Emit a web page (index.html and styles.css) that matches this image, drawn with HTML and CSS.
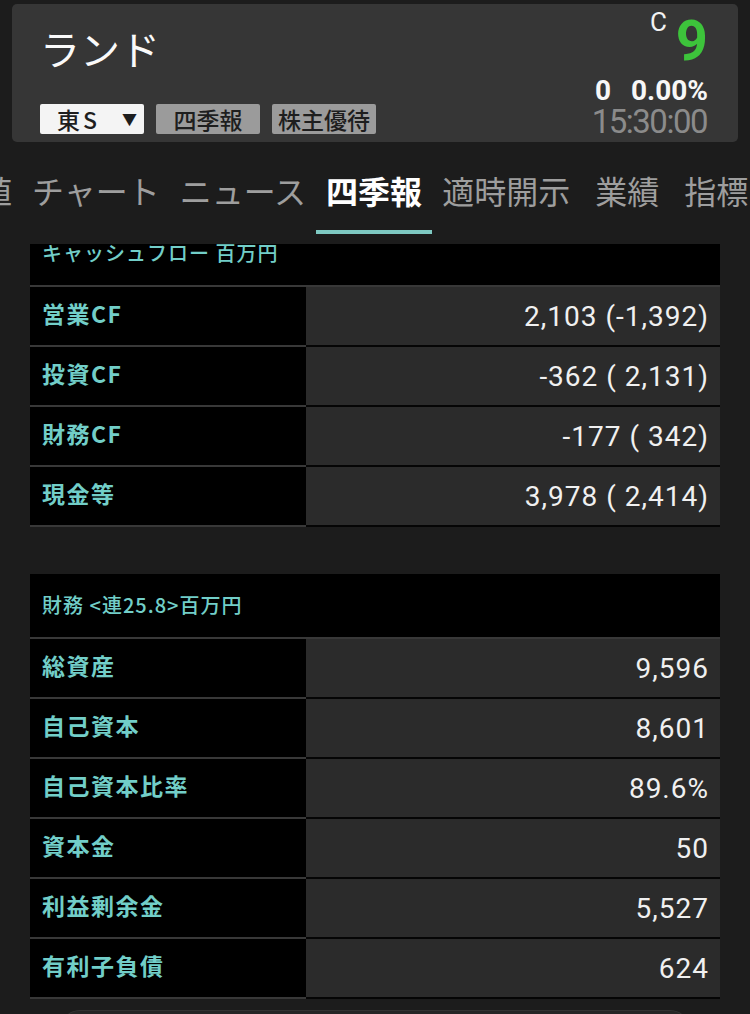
FILE: index.html
```html
<!DOCTYPE html>
<html lang="ja">
<head>
<meta charset="utf-8">
<title>ランド</title>
<link rel="stylesheet" href="styles.css">
</head>
<body>
<header class="card">
  <div class="card-left">
    <div class="title">ランド</div>
    <div class="badges">
      <div class="badge badge-white"><span class="mkt">東S</span><span class="caret">▼</span></div>
      <div class="badge">四季報</div>
      <div class="badge">株主優待</div>
    </div>
  </div>
  <div class="card-right">
    <div class="price-row">
      <span class="c-mark">C</span>
      <span class="price">9</span>
    </div>
    <div class="change-row">
      <span class="chg">0</span>
      <span class="pct">0.00%</span>
    </div>
    <div class="time">15:30:00</div>
  </div>
</header>

<nav class="tabs">
  <div class="tab">気配値</div>
  <div class="tab">チャート</div>
  <div class="tab">ニュース</div>
  <div class="tab active">四季報</div>
  <div class="tab">適時開示</div>
  <div class="tab tab-short">業績</div>
  <div class="tab">指標</div>
</nav>

<main class="viewport">
  <div class="scroll">
    <section class="block">
      <div class="block-head">キャッシュフロー 百万円</div>
      <div class="row"><div class="lbl">営業CF</div><div class="val">2,103 (-1,392)</div></div>
      <div class="row"><div class="lbl">投資CF</div><div class="val">-362 ( 2,131)</div></div>
      <div class="row"><div class="lbl">財務CF</div><div class="val">-177 ( 342)</div></div>
      <div class="row"><div class="lbl">現金等</div><div class="val">3,978 ( 2,414)</div></div>
    </section>

    <section class="block">
      <div class="block-head">財務 &lt;連25.8&gt;百万円</div>
      <div class="row"><div class="lbl">総資産</div><div class="val">9,596</div></div>
      <div class="row"><div class="lbl">自己資本</div><div class="val">8,601</div></div>
      <div class="row"><div class="lbl">自己資本比率</div><div class="val">89.6%</div></div>
      <div class="row"><div class="lbl">資本金</div><div class="val">50</div></div>
      <div class="row"><div class="lbl">利益剰余金</div><div class="val">5,527</div></div>
      <div class="row"><div class="lbl">有利子負債</div><div class="val">624</div></div>
    </section>

    <div class="more-btn"></div>
  </div>
</main>
</body>
</html>
```

FILE: styles.css
```css
* { box-sizing: border-box; }

html, body {
  margin: 0;
  padding: 0;
  background: #1c1c1c;
  height: 1014px;
  overflow: hidden;
}

body {
  font-family: "Noto Sans CJK JP", "Noto Sans", sans-serif;
  color: #fff;
}

/* ---------- header card ---------- */
.card {
  margin: 4px 12px 0;
  height: 138px;
  background: #363636;
  border-radius: 5px;
  display: flex;
  justify-content: space-between;
  padding: 0 30px 0 28px;
}

.card-left {
  display: flex;
  flex-direction: column;
  padding-top: 24px;
}

.title {
  font-size: 40px;
  line-height: 40px;
  height: 40px;
  color: #fafafa;
}

.badges {
  margin-top: 36px;
  display: flex;
  gap: 12px;
}

.badge {
  width: 104px;
  height: 30px;
  background: #9b9b9b;
  color: #1e1e1e;
  font-size: 23px;
  line-height: 30px;
  text-align: center;
  border-radius: 2px;
  font-weight: 500;
}

.badge-white {
  background: #f4f4f4;
  text-align: left;
  padding-left: 17px;
  display: flex;
  align-items: center;
}

.mkt {
  letter-spacing: 3px;
}

.caret {
  font-size: 15px;
  margin-left: 22px;
  line-height: 30px;
}

.card-right {
  display: flex;
  flex-direction: column;
  align-items: flex-end;
  padding-top: 5px;
  font-family: Roboto, "Noto Sans", sans-serif;
}

.price-row {
  display: flex;
  align-items: flex-start;
  gap: 9px;
}

.c-mark {
  font-size: 26px;
  line-height: 26px;
  color: #f2f2f2;
}

.price {
  margin-top: 4px;
  font-size: 56px;
  line-height: 56px;
  font-weight: 700;
  color: #3dc33b;
}

.change-row {
  margin-top: 8px;
  display: flex;
  gap: 20px;
  font-size: 28px;
  line-height: 28px;
  font-weight: 700;
  color: #f7f7f7;
}

.time {
  font-size: 33px;
  line-height: 33px;
  letter-spacing: -1.5px;
  color: #8b8b8b;
  margin-right: 1px;
}

/* ---------- tabs ---------- */
.tabs {
  display: flex;
  margin-left: -94px;
  padding-top: 32px;
  white-space: nowrap;
}

.tab {
  flex: none;
  padding: 0 10px 24px;
  font-size: 32px;
  line-height: 32px;
  color: #9e9e9e;
  border-bottom: 4px solid transparent;
}

.tab-short {
  padding: 0 15px 24px;
}

.tab.active {
  color: #ffffff;
  font-weight: 700;
  border-bottom-color: #7ec9c2;
}

/* ---------- content ---------- */
.viewport {
  margin: 10px 30px 0;
  height: 770px;
  overflow: hidden;
}

.scroll {
  margin-top: -22px;
}

.block + .block {
  margin-top: 47px;
}

.block-head {
  height: 65px;
  background: #000;
  border-bottom: 2px solid #383838;
  padding-left: 12px;
  display: flex;
  align-items: center;
  padding-bottom: 2px;
  font-size: 20px;
  letter-spacing: 1px;
  color: #72cec8;
  font-weight: 500;
}

.row {
  display: grid;
  grid-template-columns: 276px 1fr;
  height: 60px;
}

.lbl {
  background: #000;
  border-bottom: 2px solid #383838;
  padding-left: 12px;
  padding-bottom: 6px;
  display: flex;
  align-items: center;
  font-size: 23px;
  letter-spacing: 1.5px;
  color: #72cec8;
  font-weight: 700;
}

.val {
  background: #2b2b2b;
  border-bottom: 2px solid #050505;
  padding-right: 11px;
  display: flex;
  align-items: center;
  justify-content: flex-end;
  font-family: Roboto, "Noto Sans", sans-serif;
  font-size: 28px;
  letter-spacing: 1px;
  color: #f0f0f0;
}

.more-btn {
  margin: 11px 30px 0 30px;
  height: 40px;
  border-radius: 20px;
  background: #262626;
  border-top: 1px solid #333;
}
```
